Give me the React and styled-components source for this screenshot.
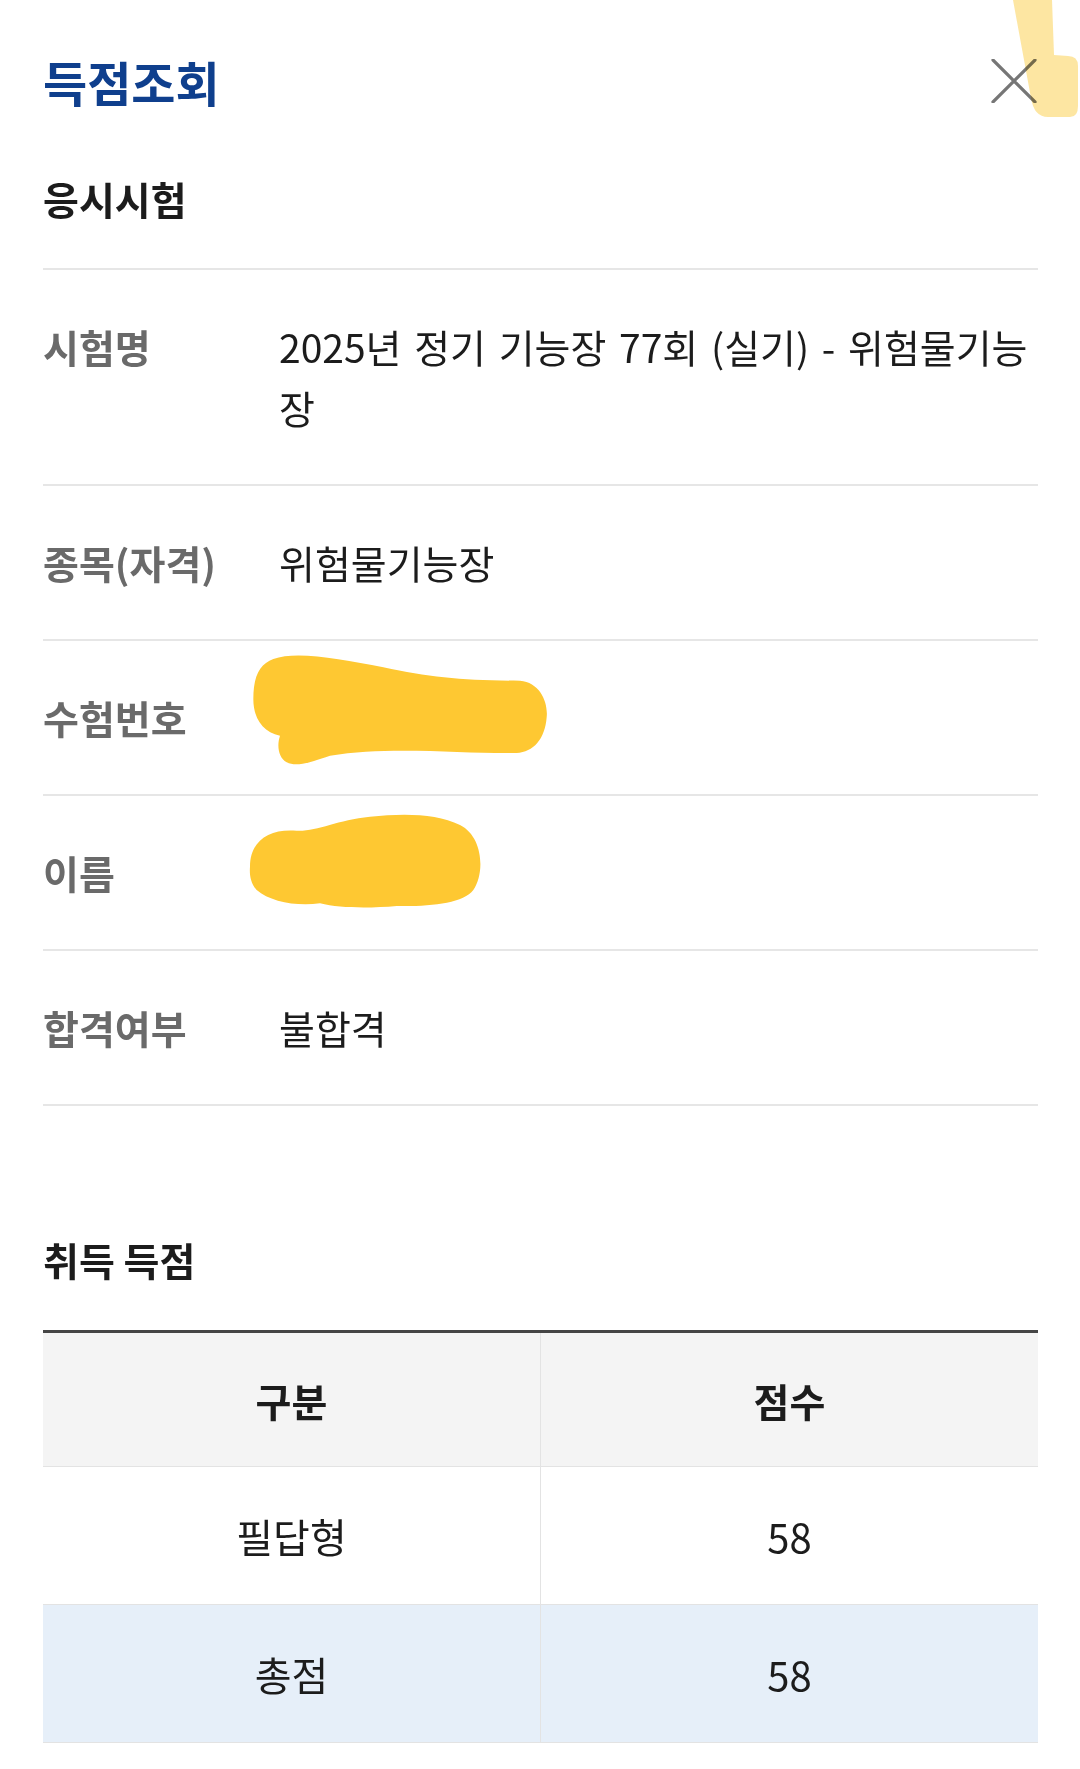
import styled, { createGlobalStyle } from "styled-components";

const GlobalStyle = createGlobalStyle`
  body {
    margin: 0;
    background: #ffffff;
    font-family: "Noto Sans CJK KR", "Noto Sans", sans-serif;
    color: #1c1c1c;
  }
`;

const Page = styled.div`
  position: relative;
  width: 1080px;
  min-height: 1769px;
  padding: 0 42px 0 43px;
  box-sizing: border-box;
  overflow: hidden;
`;

const Header = styled.header`
  display: flex;
  justify-content: space-between;
  align-items: center;
  padding-top: 50px;
  height: 62px;
`;

const Title = styled.h1`
  margin: 0;
  font-size: 48px;
  line-height: 62px;
  font-weight: 700;
  color: #0f3f8d;
`;

const CloseButton = styled.button`
  display: flex;
  align-items: center;
  justify-content: center;
  width: 48px;
  height: 48px;
  padding: 0;
  border: 0;
  background: none;
`;

const Highlight = styled.svg`
  position: absolute;
  top: 0;
  right: 0;
  mix-blend-mode: multiply;
  pointer-events: none;
`;

const SectionTitle = styled.h2`
  margin: ${(p) => p.$top}px 0 ${(p) => p.$bottom}px;
  font-size: 39px;
  line-height: 44px;
  font-weight: 700;
  color: #1c1c1c;
`;

const InfoList = styled.dl`
  margin: 0;
  border-top: 2px solid #e6e6e6;
`;

const InfoRow = styled.div`
  position: relative;
  display: grid;
  grid-template-columns: 236px 1fr;
  padding: 46px 0;
  border-bottom: 2px solid #e6e6e6;
  line-height: 61px;
`;

const Label = styled.dt`
  font-size: 39px;
  font-weight: 700;
  color: #6a6a6a;
`;

const Value = styled.dd`
  margin: 0;
  font-size: 39px;
  font-weight: 400;
  word-spacing: 4px;
  color: #1c1c1c;
  min-height: 61px;
`;

const Blob = styled.svg`
  position: absolute;
  top: ${(p) => p.$top}px;
  left: ${(p) => p.$left}px;
  pointer-events: none;
`;

const ScoreTable = styled.table`
  width: 100%;
  border-collapse: collapse;
  table-layout: fixed;
  border-top: 3px solid #454545;
`;

const HeadCell = styled.th`
  height: 133px;
  padding: 0;
  background: #f4f4f4;
  font-size: 39px;
  font-weight: 700;
  color: #1c1c1c;
  border-bottom: 1px solid #e3e3e3;
  & + & {
    border-left: 1px solid #e3e3e3;
  }
`;

const BodyRow = styled.tr`
  background: ${(p) => (p.$total ? "#e6eff9" : "#ffffff")};
`;

const Cell = styled.td`
  height: 137px;
  padding: 0;
  text-align: center;
  font-size: 40px;
  color: #1c1c1c;
  border-bottom: 1px solid #e3e3e3;
  & + & {
    border-left: 1px solid #e3e3e3;
  }
`;

const info = [
  { label: "시험명", value: "2025년 정기 기능장 77회 (실기) - 위험물기능장" },
  { label: "종목(자격)", value: "위험물기능장" },
  { label: "수험번호", value: "", blob: "number" },
  { label: "이름", value: "", blob: "name" },
  { label: "합격여부", value: "불합격" },
];

const scores = [
  { name: "필답형", score: 58 },
  { name: "총점", score: 58, total: true },
];

function NumberBlob() {
  return (
    <Blob $top={-2} $left={187} width="340" height="140" viewBox="0 0 1020 420">
      <path
        fill="#fec832"
        d="M130 60 C200 35 330 60 460 85 C600 115 700 125 870 125 C930 130 955 190 950 235 C945 300 910 340 860 342 C700 345 480 320 300 350 C240 370 200 385 170 370 C145 355 140 320 150 290 C100 280 70 240 70 180 C70 110 90 75 130 60 Z"
      />
    </Blob>
  );
}

function NameBlob() {
  return (
    <Blob $top={4} $left={187} width="280" height="120" viewBox="0 0 840 360">
      <path
        fill="#fec832"
        d="M60 200 C60 120 120 85 200 92 C260 95 320 60 420 50 C520 40 620 40 690 75 C760 110 765 220 730 270 C700 310 600 320 500 318 C420 325 330 325 270 310 C200 320 120 305 80 270 C62 250 58 225 60 200 Z"
      />
    </Blob>
  );
}

export default function App() {
  return (
    <>
      <GlobalStyle />
      <Page>
        <Header>
          <Title>득점조회</Title>
          <CloseButton aria-label="닫기">
            <svg width="46" height="44" viewBox="0 0 46 44">
              <path d="M2 1 L44 43 M44 1 L2 43" stroke="#767676" strokeWidth="3.2" strokeLinecap="round" />
            </svg>
          </CloseButton>
        </Header>

        <SectionTitle $top={64} $bottom={48}>응시시험</SectionTitle>
        <InfoList>
          {info.map((row) => (
            <InfoRow key={row.label}>
              <Label>{row.label}</Label>
              <Value>{row.value}</Value>
              {row.blob === "number" && <NumberBlob />}
              {row.blob === "name" && <NameBlob />}
            </InfoRow>
          ))}
        </InfoList>

        <SectionTitle $top={131} $bottom={49}>취득 득점</SectionTitle>
        <ScoreTable>
          <thead>
            <tr>
              <HeadCell>구분</HeadCell>
              <HeadCell>점수</HeadCell>
            </tr>
          </thead>
          <tbody>
            {scores.map((s) => (
              <BodyRow key={s.name} $total={s.total}>
                <Cell>{s.name}</Cell>
                <Cell>{s.score}</Cell>
              </BodyRow>
            ))}
          </tbody>
        </ScoreTable>

        <Highlight width="72" height="120" viewBox="0 0 72 120">
          <path
            fill="rgba(252, 206, 70, 0.5)"
            d="M5 0 L23 98 Q26 117 40 117 L62 117 Q70 117 70 106 L70 66 Q70 56 60 56 L46 55 L44 0 Z"
          />
        </Highlight>
      </Page>
    </>
  );
}
